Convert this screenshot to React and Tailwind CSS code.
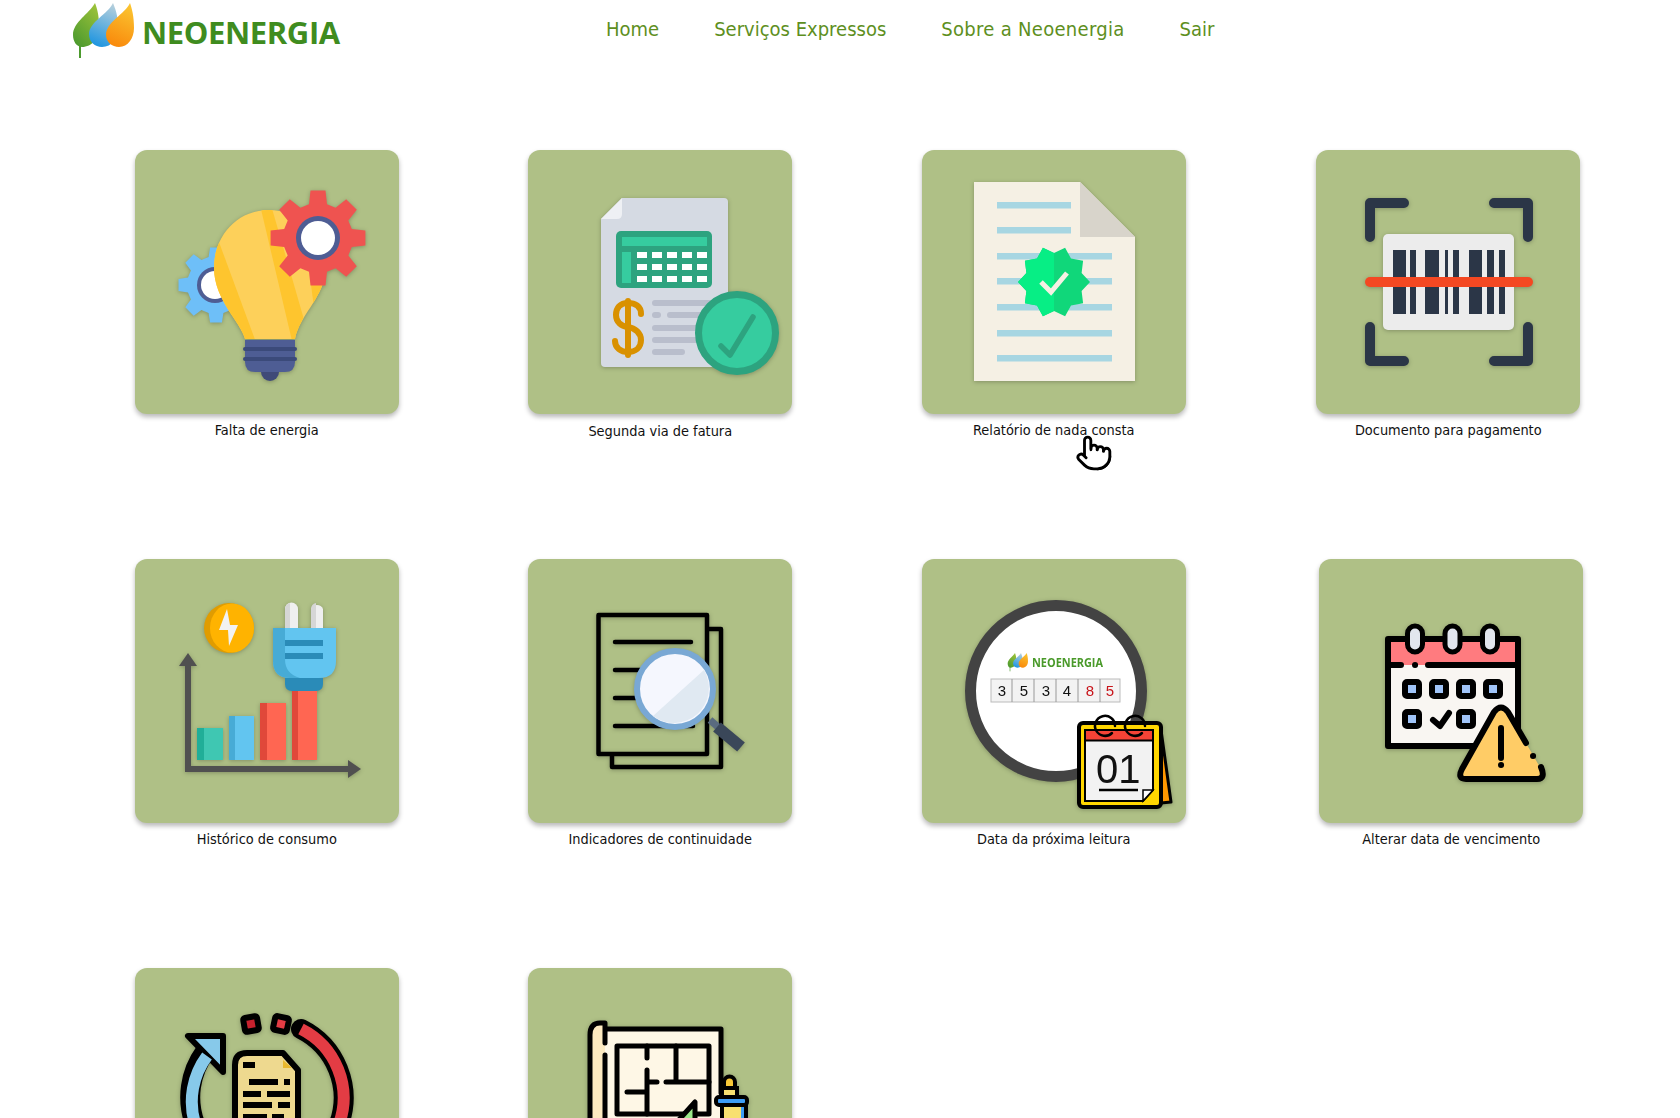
import React from "react";
import { Pointer } from "lucide-react";

// star / gear outlines are easier to compute than to type out
const star = (cx, cy, R, r, n, rot) => {
  const pts = [];
  for (let i = 0; i < n * 2; i++) {
    const a = ((rot + (i * 180) / n - 90) * Math.PI) / 180;
    const d = i % 2 === 0 ? R : r;
    pts.push(`${(cx + d * Math.cos(a)).toFixed(1)},${(cy + d * Math.sin(a)).toFixed(1)}`);
  }
  return pts.join(" ");
};

const gear = (cx, cy, R, r, n) => {
  const pts = [];
  const step = 360 / n;
  for (let i = 0; i < n; i++) {
    const c = i * step - 90;
    [
      [c - step * 0.33, r],
      [c - step * 0.2, R],
      [c + step * 0.2, R],
      [c + step * 0.33, r],
    ].forEach(([deg, d]) => {
      const a = (deg * Math.PI) / 180;
      pts.push(`${(cx + d * Math.cos(a)).toFixed(1)},${(cy + d * Math.sin(a)).toFixed(1)}`);
    });
  }
  return pts.join(" ");
};

const Leaves = () => (
  <>
    <defs>
      <linearGradient id="leafG" x1="0.8" y1="0" x2="0.2" y2="1">
        <stop offset="0" stopColor="#9cc23a" />
        <stop offset="1" stopColor="#4c9a2e" />
      </linearGradient>
      <linearGradient id="leafB" x1="0.7" y1="0" x2="0.4" y2="1">
        <stop offset="0" stopColor="#b5cfdc" />
        <stop offset="1" stopColor="#2196e0" />
      </linearGradient>
      <linearGradient id="leafO" x1="0.7" y1="0" x2="0.4" y2="1">
        <stop offset="0" stopColor="#fbc531" />
        <stop offset="1" stopColor="#f98a0c" />
      </linearGradient>
    </defs>
    <path d="M8 30 V58" stroke="#4c9a2e" strokeWidth="2" />
    <path d="M23 3 C17 14 1 22 1 35 C1 42 5 47 10 47 C20 47 28 38 27 25 C27 15 25 8 23 3 Z" fill="url(#leafG)" />
    <path d="M41 3 C36 14 17 22 17 34 C17 42 23 47 30 47 C40 47 46 38 46 26 C46 15 43 8 41 3 Z" fill="url(#leafB)" />
    <path d="M58 3 C53 14 34 22 34 35 C34 42 40 47 47 47 C56 47 62 38 62 28 C62 16 60 9 58 3 Z" fill="url(#leafO)" />
  </>
);

const Bulb = () => {
  const shape = "M110 189 C106 172 79 150 79 118 C79 85 103 60 134 60 C165 60 195 85 190 125 C186 150 165 165 160 189 Z";
  return (
    <>
      <polygon points={gear(81, 135, 38, 29, 8)} fill="#6ebff8" />
      <circle cx="80" cy="135" r="18" fill="#4e5d94" />
      <circle cx="80" cy="135" r="14" fill="#fff" />
      <clipPath id="bulbClip"><path d={shape} /></clipPath>
      <path d={shape} fill="#fdd05a" />
      <g clipPath="url(#bulbClip)" fill="#fec52e">
        <polygon points="70,60 81,84 122,195 60,195" />
        <polygon points="125,55 136,55 172,180 158,195" />
        <polygon points="176,135 195,125 180,165" />
      </g>
      <path d="M110 190 H160 V212 Q160 222 150 222 H120 Q110 222 110 212 Z" fill="#4e5d94" />
      <path d="M110 199 H160 M110 209 H160" stroke="#3b4a7a" strokeWidth="4" strokeLinecap="round" />
      <path d="M126 222 H144 A9 9 0 0 1 126 222 Z" fill="#3f4a78" />
      <polygon points={gear(183, 88, 48, 35, 8)} fill="#ef5350" />
      <circle cx="183" cy="88" r="22" fill="#4e5d94" />
      <circle cx="183" cy="88" r="17" fill="#fff" />
    </>
  );
};

const Invoice = () => (
  <>
    <path d="M94 48 H196 Q200 48 200 52 V213 Q200 217 196 217 H77 Q73 217 73 213 V69 Z" fill="#d5dae3" />
    <path d="M94 48 L73 69 H89 Q94 69 94 64 Z" fill="#eef0f4" />
    <rect x="88" y="81" width="96" height="57" rx="5" fill="#2da37f" />
    <rect x="94" y="87" width="85" height="9" fill="#36cc9f" />
    <rect x="94" y="102" width="9" height="31" fill="#36cc9f" />
    {[102, 114, 126].map((y) =>
      [109, 124, 139, 154, 169].map((x) => <rect key={`${x}-${y}`} x={x} y={y} width="10" height="6" fill="#fff" />)
    )}
    <g fill="none" stroke="#d99100" strokeWidth="6" strokeLinecap="round">
      <path d="M113 164 C113 156 107 153 100 153 C92 153 88 158 88 165 C88 172 93 176 100 177 C107 178 113 183 113 190 C113 198 107 202 100 202 C93 202 87 198 87 191" />
      <path d="M100 151 V205" />
    </g>
    <g stroke="#b9becc" strokeWidth="6" strokeLinecap="round">
      <path d="M127 153 H195 M127 165 H130 M142 165 H195 M127 178 H195 M127 190 H195 M127 202 H154" />
    </g>
    <circle cx="209" cy="183" r="38.5" fill="#36cc9f" stroke="#2da37f" strokeWidth="7" />
    <path d="M193 196 L202 205 L225 167" fill="none" stroke="#2da37f" strokeWidth="5.5" strokeLinecap="round" strokeLinejoin="round" />
  </>
);

const Report = () => (
  <>
    <polygon points="52,32 158,32 213,87 213,231 52,231" fill="#f5f0e4" />
    <polygon points="158,32 213,87 158,87" fill="#d8d4cb" />
    {[55, 80].map((y) => <rect key={y} x="75" y={y - 3} width="74" height="6.5" fill="#a7d6e2" />)}
    {[106, 131, 157, 183, 208].map((y) => <rect key={y} x="75" y={y - 3} width="115" height="6.5" fill="#a7d6e2" />)}
    <clipPath id="badgeL"><rect x="90" y="90" width="42" height="84" /></clipPath>
    <polygon points={star(132, 132, 36, 29, 10, 18)} fill="#10d77a" />
    <polygon points={star(132, 132, 36, 29, 10, 18)} fill="#07ee85" clipPath="url(#badgeL)" />
    <path d="M119 132 L129 142 L145 123" fill="none" stroke="#f5f0e4" strokeWidth="5" />
  </>
);

const Barcode = () => (
  <>
    <g fill="none" stroke="#2b3647" strokeWidth="10" strokeLinecap="round" strokeLinejoin="round">
      <path d="M54 87 V53 H88 M178 53 H212 V87 M54 177 V211 H88 M178 211 H212 V177" />
    </g>
    <rect x="67" y="84" width="131" height="96" rx="5" fill="#ececec" />
    {[[77, 13], [94, 6], [109, 14], [129, 3], [137, 6], [153, 13], [171, 7], [183, 6]].map(([x, w]) => (
      <rect key={x} x={x} y="100" width={w} height="64" fill="#2b3647" />
    ))}
    <path d="M54 132 H212" stroke="#f44822" strokeWidth="10" strokeLinecap="round" />
  </>
);

const Usage = () => (
  <>
    <circle cx="94" cy="69" r="25" fill="#e09c00" />
    <ellipse cx="97" cy="69" rx="22" ry="24.5" fill="#ffb300" />
    <polygon points="92,50 84,71 93,71 94,87 103,66 95,66" fill="#f2f2f2" />
    <path d="M150 69 V50 A6.5 6.5 0 0 1 163 50 V69 Z" fill="#efefef" />
    <path d="M150 69 V50 A6.5 6.5 0 0 1 155 44 V69 Z" fill="#d6d6d6" />
    <path d="M176 69 V50 A6.5 6.5 0 0 1 188 50 V69 Z" fill="#efefef" />
    <path d="M176 69 V50 A6.5 6.5 0 0 1 181 44 V69 Z" fill="#d6d6d6" />
    <path d="M138 69 H201 V102 Q201 119 184 119 H155 Q138 119 138 102 Z" fill="#62c5f0" />
    <path d="M138 69 H150 V100 Q150 115 165 119 H155 Q138 119 138 102 Z" fill="#47abd6" />
    <rect x="150" y="81" width="38" height="6" fill="#2a8bb8" />
    <rect x="150" y="94" width="38" height="6" fill="#2a8bb8" />
    <path d="M150 119 H188 V125 Q188 132 181 132 H157 Q150 132 150 125 Z" fill="#2a8bb8" />
    <rect x="62" y="169" width="26" height="32" fill="#3fc7b2" />
    <rect x="62" y="169" width="7" height="32" fill="#20ae98" />
    <rect x="94" y="157" width="25" height="44" fill="#62c5f0" />
    <rect x="94" y="157" width="6" height="44" fill="#47abd6" />
    <rect x="125" y="144" width="26" height="57" fill="#ff6652" />
    <rect x="125" y="144" width="7" height="57" fill="#e0483a" />
    <rect x="157" y="132" width="25" height="69" fill="#ff6652" />
    <rect x="157" y="132" width="6" height="69" fill="#e0483a" />
    <path d="M53 100 V210 H216" fill="none" stroke="#505050" strokeWidth="6" />
    <polygon points="53,94 62,107 44,107" fill="#505050" />
    <polygon points="226,210 213,201 213,219" fill="#505050" />
  </>
);

const Continuity = () => (
  <>
    <g fill="none" stroke="#000" strokeWidth="4.5" strokeLinejoin="round">
      <path d="M181 70 H193 V208 H84 V195" />
      <rect x="70.5" y="56" width="108.5" height="139" />
    </g>
    <path d="M87 83 H163 M87 111 H125 M87 139 H125 M87 167 H165" stroke="#000" strokeWidth="4.5" strokeLinecap="round" />
    <path d="M182 161 L190 168" stroke="#5a6b7f" strokeWidth="7" />
    <path d="M189 168 L213 188" stroke="#3a4759" strokeWidth="12" />
    <circle cx="147" cy="130" r="38" fill="#f5f7fe" stroke="#79a8d4" strokeWidth="6" />
    <path d="M176 111 A35 35 0 0 1 125 157 Z" fill="#e0e9f2" />
  </>
);

const NextReading = () => (
  <>
    <circle cx="134" cy="132" r="85.5" fill="#fff" stroke="#434343" strokeWidth="11" />
    <svg x="85" y="93" width="22" height="20" viewBox="0 0 64 60"><Leaves /></svg>
    <text x="110" y="108" fontSize="11.5" fontWeight="700" fill="#4a9a2a" textLength="71" lengthAdjust="spacingAndGlyphs" fontFamily="'Open Sans', sans-serif">NEOENERGIA</text>
    <rect x="69" y="120" width="129" height="23" fill="#f3f3f3" stroke="#bbb" />
    <path d="M90 120 V143 M112 120 V143 M134 120 V143 M156 120 V143 M178 120 V143" stroke="#999" />
    {[["3", 80], ["5", 102], ["3", 124], ["4", 145], ["8", 168], ["5", 188]].map(([d, x], i) => (
      <text key={i} x={x} y="137" textAnchor="middle" fontSize="15" fontFamily="'Liberation Sans', sans-serif" fill={i > 3 ? "#c8141a" : "#111"}>{d}</text>
    ))}
    <polygon points="239,171 249,243 239,244" fill="#ff9800" stroke="#000" strokeWidth="3" strokeLinejoin="round" />
    <rect x="157" y="164" width="82" height="84" rx="4" fill="#ffd600" stroke="#000" strokeWidth="4" />
    <rect x="163" y="171" width="68" height="11" fill="#f44336" />
    <path d="M163 182 H231 V231 L221 242 H163 Z" fill="#f2f2f2" />
    <path d="M163 171 H231 V231 L221 242 H163 Z M163 181.5 H231" fill="none" stroke="#000" strokeWidth="2" />
    <path d="M221 242 V231 H231 Z" fill="#fff" stroke="#000" strokeWidth="1.5" />
    <text x="174" y="224" fontSize="40" fontFamily="'Liberation Sans', sans-serif" fill="#111" fontWeight="300">01</text>
    <path d="M177 231 H216" stroke="#000" strokeWidth="2.5" />
    <path d="M190 174 A10 10 0 1 1 193 167 M220 174 A10 10 0 1 1 223 167" fill="none" stroke="#000" strokeWidth="2.5" strokeLinecap="round" />
  </>
);

const DueDate = () => (
  <>
    <rect x="69" y="80" width="130" height="107" rx="2" fill="#f9f6f2" />
    <rect x="69" y="80" width="130" height="26" fill="#ff7b7f" />
    <g fill="none" stroke="#000" strokeWidth="6" strokeLinecap="round" strokeLinejoin="round">
      <path d="M69 106 V187 H170 M199 175 V80 H69 V106 M69 106 H82 M109 106 H199 M96 106 H96.1" />
    </g>
    {[88.5, 126, 163.5].map((x) => <rect key={x} x={x} y="67" width="15" height="26" rx="7.5" fill="#e2e6ee" stroke="#000" strokeWidth="5" />)}
    {[[86, 123], [113, 123], [140, 123], [167, 123], [86, 153], [140, 153]].map(([x, y]) => (
      <rect key={`${x}-${y}`} x={x} y={y} width="14" height="14" rx="2" fill="#a0c4f8" stroke="#000" strokeWidth="6" />
    ))}
    <path d="M114 161 L121 167 L130 154" fill="none" stroke="#000" strokeWidth="6" strokeLinecap="round" strokeLinejoin="round" />
    <path d="M175 153 Q182 144 189 153 L222 210 Q227 220 218 220 H147 Q138 220 143 210 Z" fill="#ffcc66" />
    <g fill="none" stroke="#000" strokeWidth="6" strokeLinecap="round" strokeLinejoin="round">
      <path d="M207 184 L189 153 Q182 144 175 153 L143 210 Q138 220 147 220 H218 Q227 220 222 208" />
      <path d="M182 169 V199 M182 206 H182.1 M214 197 H214.1" />
    </g>
  </>
);

const Recurring = () => (
  <>
    <g fill="none" strokeLinecap="butt">
      <path d="M166 61 A77 77 0 0 1 204 156" stroke="#000" strokeWidth="20" strokeLinecap="round" />
      <path d="M70 84 A77 77 0 0 0 60 156" stroke="#000" strokeWidth="20" />
    </g>
    <polygon points="53,68 88,68 88,104" fill="#87c9ea" stroke="#000" strokeWidth="6" strokeLinejoin="round" />
    <g fill="none">
      <path d="M166 61 A77 77 0 0 1 204 156" stroke="#e33c44" strokeWidth="12" />
      <path d="M72 88 A77 77 0 0 0 60 156" stroke="#87c9ea" strokeWidth="12" />
    </g>
    <rect x="109" y="49" width="14" height="14" rx="2" fill="#c8222e" stroke="#000" strokeWidth="6" transform="rotate(-10 116 56)" />
    <rect x="139" y="49" width="14" height="14" rx="2" fill="#e33c44" stroke="#000" strokeWidth="6" transform="rotate(12 146 56)" />
    <path d="M112 85 H148 L163 102 V200 H100 V97 Q100 85 112 85 Z" fill="#eed98f" stroke="#000" strokeWidth="6" strokeLinejoin="round" />
    <polygon points="148,92 148,100 157,100" fill="#e8b82e" />
    <g fill="#000">
      {[[108, 94, 12], [114, 111, 29], [149, 111, 6], [108, 123, 18], [132, 123, 23], [108, 134, 29], [143, 134, 12], [108, 146, 24], [137, 146, 12]].map(([x, y, w]) => (
        <rect key={`${x}-${y}`} x={x} y={y} width={w} height="6" />
      ))}
    </g>
  </>
);

const Blueprint = () => (
  <>
    <path d="M77 61 H194 V180 H77 Z" fill="#fef7e6" />
    <path d="M77 55 H72 Q62 55 62 67 V180 H77 Z" fill="#fdeac0" />
    <g fill="none" stroke="#000" strokeWidth="5" strokeLinecap="round" strokeLinejoin="round">
      <path d="M79 61 H193 V125" />
      <path d="M77 75 V55 H72 Q62 55 62 67 V180 M77 87 V180" />
      <rect x="89" y="78" width="92" height="68" />
      <path d="M119 78 V90 M119 102 V146 M148 78 V114 M119 114 H129 M138 114 H181 M99 124 H119" />
    </g>
    <polygon points="167,134 167,175 130,175" fill="#9be88a" stroke="#000" strokeWidth="5" strokeLinejoin="round" />
    <path d="M196 124 V114 A5.5 5.500 0 0 1 207 114 V124 Z" fill="#f8c838" stroke="#000" strokeWidth="4" />
    <rect x="194" y="120" width="15" height="10" fill="#f8e070" stroke="#000" strokeWidth="4" />
    <rect x="194" y="135" width="24" height="40" fill="#3d9df5" stroke="#000" strokeWidth="4" />
    <rect x="196" y="137" width="17" height="36" fill="#f8e070" />
    <rect x="188" y="129" width="31" height="8" rx="3" fill="#3d9df5" stroke="#000" strokeWidth="4" />
  </>
);

const services = [
  { label: "Falta de energia", Icon: Bulb },
  { label: "Segunda via de fatura", Icon: Invoice, labelClass: "mt-[8px]" },
  { label: "Relatório de nada consta", Icon: Report },
  { label: "Documento para pagamento", Icon: Barcode, itemClass: "ml-[2px]" },
  { label: "Histórico de consumo", Icon: Usage },
  { label: "Indicadores de continuidade", Icon: Continuity },
  { label: "Data da próxima leitura", Icon: NextReading },
  { label: "Alterar data de vencimento", Icon: DueDate, itemClass: "ml-[8px]" },
  { label: "", Icon: Recurring },
  { label: "", Icon: Blueprint },
];

const ServiceCard = ({ label, Icon, labelClass = "mt-[7px]", itemClass = "" }) => (
  <div className={`w-[264px] flex flex-col items-center ${itemClass}`}>
    <div className="w-[264px] h-[264px] shrink-0 rounded-xl bg-[#afc086] shadow-[0_3px_5px_rgba(0,0,0,0.28)]">
      <svg viewBox="0 0 264 264" className="w-full h-full drop-shadow-[0_1px_2px_rgba(0,0,0,0.25)]">
        <Icon />
      </svg>
    </div>
    {label && <p className={`${labelClass} text-[14.4px] leading-[18px] text-[#111] whitespace-nowrap`}>{label}</p>}
  </div>
);

export default function App() {
  return (
    <div className="relative h-screen overflow-hidden bg-white font-['DejaVu_Sans_Condensed','DejaVu_Sans',sans-serif]">
      <header className="flex h-[64px] items-start pl-[72px]">
        <div className="flex items-start w-[534px]">
          <svg width="64" height="60" viewBox="0 0 64 60" className="shrink-0">
            <Leaves />
          </svg>
          <span className="ml-[6px] mt-[12px] text-[31px] leading-[40px] font-bold tracking-[-0.4px] text-[#3f8c1f] font-['Open_Sans',sans-serif]">
            NEOENERGIA
          </span>
        </div>
        <nav className="flex gap-[55px] pt-[16px] text-[20px] leading-[26px] text-[#5e8f1e] whitespace-nowrap">
          <a href="#">Home</a>
          <a href="#">Serviços Expressos</a>
          <a href="#" className="tracking-[0.3px]">Sobre a Neoenergia</a>
          <a href="#">Sair</a>
        </nav>
      </header>

      <main className="ml-[70px] mt-[86px] w-[1574px] grid grid-cols-4 auto-rows-[409px] justify-items-center">
        {services.map((s, i) => (
          <ServiceCard key={i} {...s} />
        ))}
      </main>

      <Pointer size={38} strokeWidth={1.8} fill="#fff" color="#000" className="absolute left-[1075px] top-[434px]" />
    </div>
  );
}
